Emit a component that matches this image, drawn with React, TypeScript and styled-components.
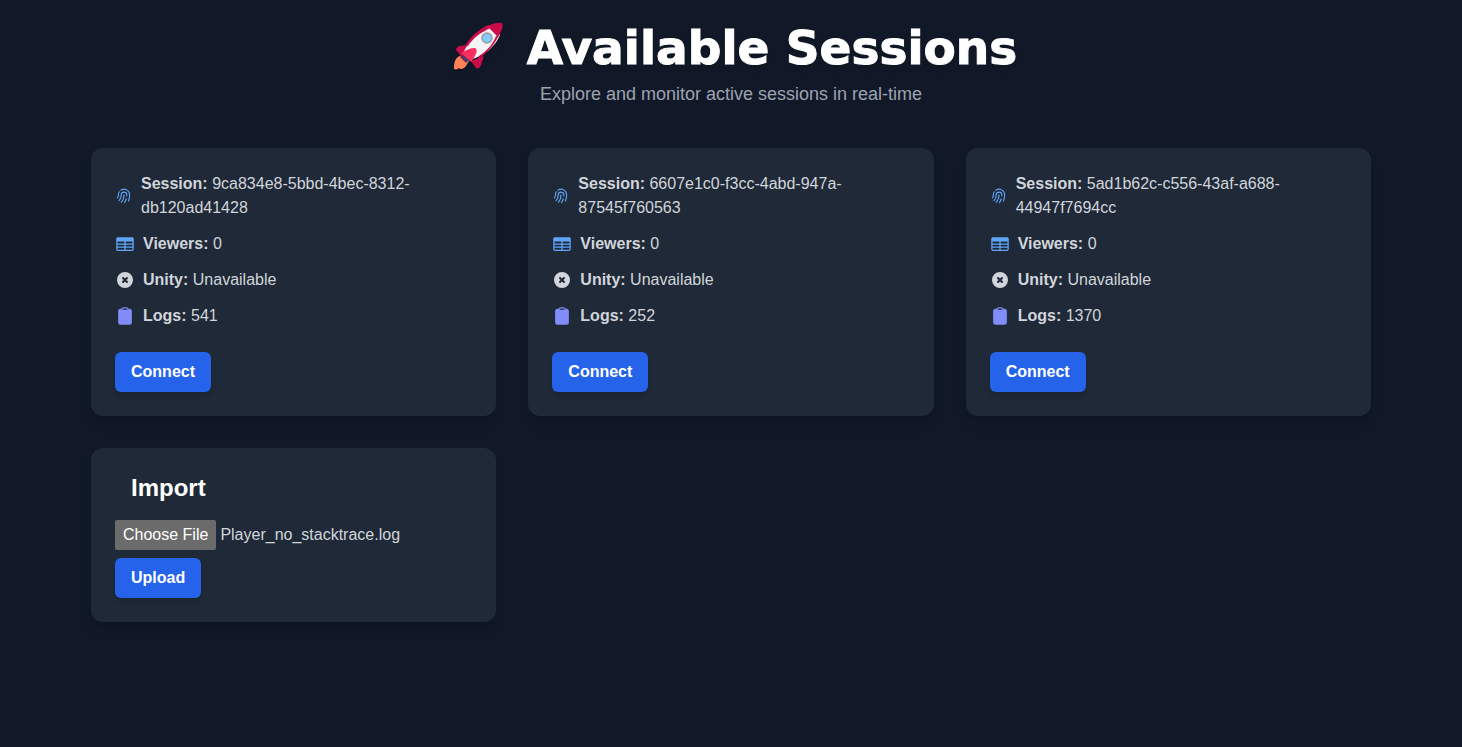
import React, { useState } from 'react';
import styled, { createGlobalStyle } from 'styled-components';
import { HiXCircle } from 'react-icons/hi';
import { HiClipboard, HiFingerPrint, HiTableCells } from 'react-icons/hi2';

const GlobalStyle = createGlobalStyle`
  *, *::before, *::after { box-sizing: border-box; }
  body {
    margin: 0;
    background: #111827;
    color: #d1d5db;
    font-family: Arial, "Liberation Sans", sans-serif;
    font-size: 16px;
    line-height: 24px;
  }
`;

const Page = styled.main`
  max-width: 1328px;
  margin: 0 auto;
  padding: 24px;
`;

const Header = styled.header`
  display: flex;
  flex-direction: column;
  align-items: center;
  gap: 8px;
  margin-bottom: 40px;
  text-align: center;
`;

const Title = styled.h1`
  display: flex;
  align-items: center;
  gap: 16px;
  margin: 0;
  color: #ffffff;
  font-family: "Arial Black", "DejaVu Sans", sans-serif;
  font-size: 47px;
  font-weight: 800;
  line-height: 48px;
  -webkit-text-stroke: 1px #ffffff;
  filter: drop-shadow(0 4px 3px rgba(0, 0, 0, 0.07)) drop-shadow(0 2px 2px rgba(0, 0, 0, 0.06));
`;

const RocketIcon = styled.svg`
  flex: none;
  width: 66px;
  height: 48px;
  overflow: visible;
`;

const Subtitle = styled.p`
  margin: 0;
  color: #9ca3af;
  font-size: 18px;
  line-height: 28px;
`;

const Grid = styled.div`
  display: grid;
  grid-template-columns: repeat(3, minmax(0, 1fr));
  align-items: start;
  gap: 32px;

  @media (max-width: 1023px) {
    grid-template-columns: repeat(2, minmax(0, 1fr));
  }
  @media (max-width: 700px) {
    grid-template-columns: minmax(0, 1fr);
  }
`;

const Card = styled.section`
  padding: 24px;
  border-radius: 12px;
  background: #1f2937;
  box-shadow: 0 10px 15px -3px rgba(0, 0, 0, 0.1), 0 4px 6px -4px rgba(0, 0, 0, 0.1);
`;

const Details = styled.div`
  display: flex;
  flex-direction: column;
  gap: 12px;
  margin-bottom: 24px;
`;

const Detail = styled.p<{ $tone: string; $iconWidth?: number }>`
  display: flex;
  align-items: center;
  gap: 8px;
  margin: 0;

  svg {
    flex: none;
    width: ${({ $iconWidth = 20 }) => $iconWidth}px;
    height: 20px;
    color: ${({ $tone }) => $tone};
  }
`;

const Button = styled.button`
  display: block;
  padding: 8px 16px;
  border: 0;
  border-radius: 6px;
  background: #2563eb;
  color: #ffffff;
  font: inherit;
  font-weight: 700;
  cursor: pointer;
  box-shadow: 0 4px 6px -1px rgba(0, 0, 0, 0.1), 0 2px 4px -2px rgba(0, 0, 0, 0.1);

  &:hover { background: #1d4ed8; }
`;

const ImportTitle = styled.h2`
  margin: 0 0 16px;
  padding: 0 16px;
  color: #ffffff;
  font-size: 24px;
  font-weight: 700;
  line-height: 32px;
`;

const FileField = styled.label`
  display: flex;
  align-items: center;
  gap: 4px;
  margin-bottom: 8px;
  cursor: pointer;
`;

const FileInput = styled.input`
  position: absolute;
  width: 1px;
  height: 1px;
  opacity: 0;
`;

const FileButton = styled.span`
  padding: 3px 8px;
  border-radius: 2px;
  background: #6b6b6b;
  color: #ffffff;
`;

interface Session {
  id: string;
  viewers: number;
  unity: string;
  logs: number;
}

const sessions: Session[] = [
  { id: '9ca834e8-5bbd-4bec-8312-db120ad41428', viewers: 0, unity: 'Unavailable', logs: 541 },
  { id: '6607e1c0-f3cc-4abd-947a-87545f760563', viewers: 0, unity: 'Unavailable', logs: 252 },
  { id: '5ad1b62c-c556-43af-a688-44947f7694cc', viewers: 0, unity: 'Unavailable', logs: 1370 },
];

function Rocket() {
  return (
    <RocketIcon viewBox="0 0 66 48" aria-hidden="true">
      <path d="M17 31C10 33 9 38 9 45c2 1 4 0 5-1 1 2 5 1 7-2l3-5z" fill="#ff8257" />
      <path d="M18 30l6 6-3 3-6-6z" fill="#533566" />
      <path d="M26 21L14 22c-2 1-3 3-3 4l6 7zM39 32l-3 9c-1 3-3 4-5 3l-5-7z" fill="#ca0b4a" />
      <path d="M46 2C35 6 25 15 18 29l7 7C40 31 50 23 55 11z" fill="#f4f4f4" />
      <path d="M42 2C48-1 55-2 57-1c2 3-1 9-4 14L42 2z" fill="#ca0b4a" />
      <path d="M43 1C33 6 25 13 20 22h3C28 14 36 8 46 4zM54 11C48 23 42 29 33 35l1-3c8-5 14-12 17-20z" fill="#ca0b4a" />
      <path d="M16 29c5-3 9-5 14-5 3 2 2 6-4 14z" fill="#f92f60" />
      <circle cx="42" cy="14" r="5" fill="#83cbff" stroke="#9b9b9b" strokeWidth="1.5" />
    </RocketIcon>
  );
}

function SessionCard({ session }: { session: Session }) {
  return (
    <Card>
      <Details>
        <Detail $tone="#60a5fa" $iconWidth={18}>
          <HiFingerPrint aria-hidden="true" />
          <span><strong>Session:</strong> {session.id}</span>
        </Detail>
        <Detail $tone="#60a5fa">
          <HiTableCells aria-hidden="true" />
          <span><strong>Viewers:</strong> {session.viewers}</span>
        </Detail>
        <Detail $tone="#d1d5db">
          <HiXCircle aria-hidden="true" />
          <span><strong>Unity:</strong> {session.unity}</span>
        </Detail>
        <Detail $tone="#818cf8">
          <HiClipboard aria-hidden="true" />
          <span><strong>Logs:</strong> {session.logs}</span>
        </Detail>
      </Details>
      <Button type="button">Connect</Button>
    </Card>
  );
}

function ImportCard() {
  const [fileName, setFileName] = useState('Player_no_stacktrace.log');

  return (
    <Card>
      <ImportTitle>Import</ImportTitle>
      <FileField htmlFor="log-file">
        <FileInput
          id="log-file"
          type="file"
          onChange={(event) => setFileName(event.target.files?.[0]?.name ?? 'No file chosen')}
        />
        <FileButton>Choose File</FileButton>
        <span>{fileName}</span>
      </FileField>
      <Button type="button">Upload</Button>
    </Card>
  );
}

export default function App() {
  return (
    <>
      <GlobalStyle />
      <Page>
        <Header>
          <Title>
            <Rocket />
            Available Sessions
          </Title>
          <Subtitle>Explore and monitor active sessions in real-time</Subtitle>
        </Header>
        <Grid>
          {sessions.map((session) => (
            <SessionCard key={session.id} session={session} />
          ))}
          <ImportCard />
        </Grid>
      </Page>
    </>
  );
}
